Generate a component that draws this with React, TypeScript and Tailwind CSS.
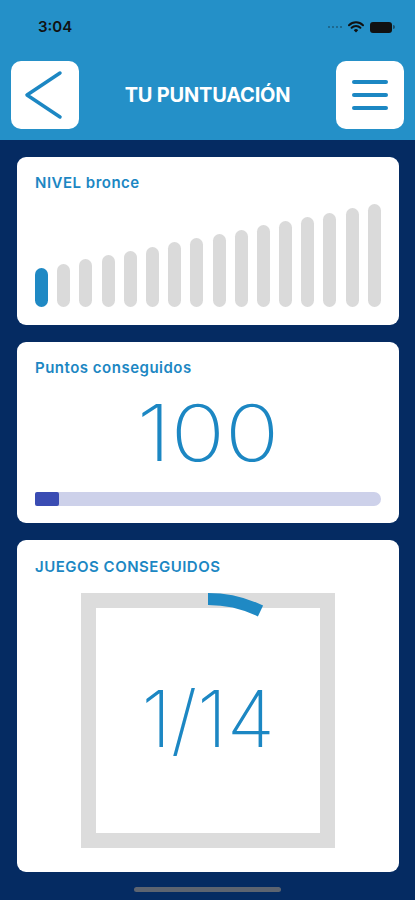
import React from "react"

const BLUE = "#1c87c3"

const bars = Array.from({ length: 16 }, (_, i) => Math.round(39 + (i * 64) / 15))

const StatusBar = () => (
  <div className="flex h-[61px] items-start justify-between px-[38px] pt-[18px]">
    <span className="text-[15px] font-semibold leading-[18px] text-[#111]">3:04</span>
    <div className="mr-[-18px] flex items-center gap-[6px] pt-[3px]">
      {/* signal dots */}
      <div className="flex items-end gap-[2px] opacity-40">
        {[0, 1, 2, 3].map((d) => (
          <span key={d} className="h-[2px] w-[2px] rounded-full bg-[#111]" />
        ))}
      </div>
      {/* wifi */}
      <svg width="16" height="12" viewBox="0 0 16 12">
        <path d="M1 4.2a10 10 0 0 1 14 0" fill="none" stroke="#111" strokeWidth="2" strokeLinecap="round" />
        <path d="M3.6 6.8a6.3 6.3 0 0 1 8.8 0" fill="none" stroke="#111" strokeWidth="2" strokeLinecap="round" />
        <path d="M8 11.5l-2.2-2.3a3.1 3.1 0 0 1 4.4 0z" fill="#111" />
      </svg>
      {/* battery */}
      <div className="flex items-center gap-[1px]">
        <div className="h-[11px] w-[22px] rounded-[3px] bg-[#111]" />
        <div className="h-[4px] w-[2px] rounded-r-sm bg-[#111] opacity-50" />
      </div>
    </div>
  </div>
)

const Header = () => (
  <div className="h-[140px] bg-[#2490c8]">
    <StatusBar />
    <div className="flex items-center justify-between px-[11px]">
      <button type="button" className="flex h-[68px] w-[68px] items-center justify-center rounded-[10px] bg-white">
        <svg width="68" height="68" viewBox="0 0 68 68">
          <path d="M49 12L16 34l33 22" fill="none" stroke={BLUE} strokeWidth="3.5" strokeLinecap="round" strokeLinejoin="round" />
        </svg>
      </button>
      <h1 className="text-[20px] font-bold tracking-[-0.2px] text-white">TU PUNTUACIÓN</h1>
      <button type="button" className="flex h-[68px] w-[68px] flex-col items-center justify-center gap-[9px] rounded-[10px] bg-white">
        <span className="h-[4px] w-[36px] rounded-full bg-[#1c87c3]" />
        <span className="h-[4px] w-[36px] rounded-full bg-[#1c87c3]" />
        <span className="h-[4px] w-[36px] rounded-full bg-[#1c87c3]" />
      </button>
    </div>
  </div>
)

const CardTitle = ({ children, upper }: { children: React.ReactNode; upper?: boolean }) => (
  <h2
    className={
      upper
        ? "text-[15px] font-semibold uppercase leading-[16px] tracking-[0.5px] text-[#1c87c3]"
        : "text-[15px] font-semibold leading-[16px] tracking-[0.5px] text-[#1c87c3]"
    }
  >
    {children}
  </h2>
)

const App = () => {
  const circumference = 2 * Math.PI * 121
  const arc = circumference / 14

  return (
    <div className="flex min-h-[900px] w-full flex-col bg-[#052b62]" style={{ fontFamily: "Inter, 'Noto Sans', sans-serif" }}>
      <Header />

      <main className="flex flex-col gap-[17px] pl-[17px] pr-[16px] pt-[17px]">
        {/* Nivel */}
        <section className="rounded-[9px] bg-white px-[18px] pb-[18px] pt-[18px]">
          <CardTitle>NIVEL bronce</CardTitle>
          <div className="mt-[13px] flex h-[103px] items-end justify-between">
            {bars.map((h, i) => (
              <div
                key={i}
                className={i === 0 ? "w-[13px] rounded-full bg-[#1f89c4]" : "w-[13px] rounded-full bg-[#dadada]"}
                style={{ height: h }}
              />
            ))}
          </div>
        </section>

        {/* Puntos */}
        <section className="rounded-[9px] bg-white px-[18px] pb-[17px] pt-[18px]">
          <CardTitle>Puntos conseguidos</CardTitle>
          <p className="mt-[18px] scale-x-[1.15] text-center text-[78px] font-extralight leading-none text-[#1c87c3]">100</p>
          <div className="mt-[20px] h-[14px] rounded-full bg-[#cdd1ea]">
            <div className="h-full w-[24px] rounded-[2px] bg-[#3a4cb3]" />
          </div>
        </section>

        {/* Juegos */}
        <section className="flex flex-col rounded-[9px] bg-white px-[18px] pb-[24px] pt-[19px]">
          <CardTitle upper>Juegos conseguidos</CardTitle>
          <div className="relative mx-auto mt-[18px] flex h-[255px] w-[254px] items-center justify-center border-[15px] border-[#dcdcdc]">
            <svg className="absolute left-[-15px] top-[-15px]" width="254" height="254" viewBox="0 0 254 254">
              <circle
                cx="127"
                cy="127"
                r="121"
                fill="none"
                stroke="#1f89c4"
                strokeWidth="12"
                strokeDasharray={`${arc} ${circumference}`}
                transform="rotate(-90 127 127)"
              />
            </svg>
            <span className="pb-[3px] text-[78px] font-extralight leading-none text-[#1c87c3]">1/14</span>
          </div>
        </section>
      </main>

      <div className="mt-auto flex justify-center pb-[8px] pt-[14px]">
        <div className="h-[5px] w-[147px] rounded-full bg-[#5d6470]" />
      </div>
    </div>
  )
}

export default App
